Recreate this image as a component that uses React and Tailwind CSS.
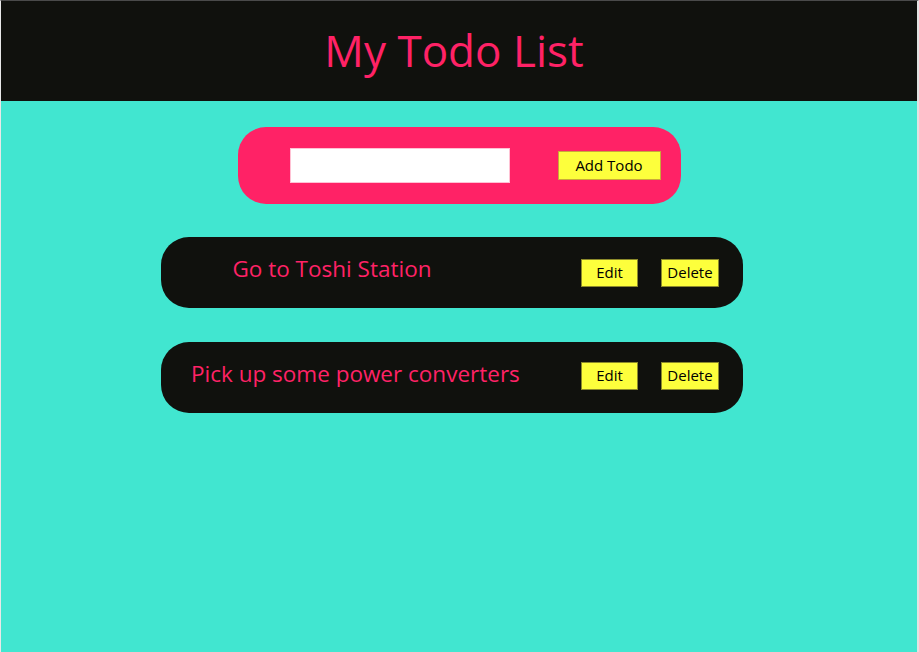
export default function App() {
  const todos = [
    { text: "Go to Toshi Station", btn: "" },
    { text: "Pick up some power converters", btn: "-mt-[4px]" },
  ];
  return (
    <div
      className="min-h-[652px] bg-[#41e6d0] border-l border-l-[#e8e8e8] border-r-2 border-r-[#e2e2e2] border-t border-t-[#4a4a4a]"
      style={{ fontFamily: '"Open Sans", "Noto Sans", sans-serif' }}
    >
      <header className="h-[100px] bg-[#10110d] flex items-center justify-center">
        <h1 className="text-[44px] leading-none text-[#ff2266] -mt-[3px] -ml-[10px]">My Todo List</h1>
      </header>

      <form
        className="mt-[26px] mx-auto w-[443px] h-[77px] rounded-[28px] bg-[#ff2266] flex items-center pl-[52px] pr-[20px]"
        onSubmit={(e) => e.preventDefault()}
      >
        <input
          type="text"
          className="w-[220px] h-[35px] bg-white border border-[#ffc2d4] outline-none px-2"
        />
        <button
          type="submit"
          className="ml-auto w-[103px] h-[29px] bg-[#fdff3c] border border-[#c9a83a] text-[15px] text-black leading-none"
        >
          Add Todo
        </button>
      </form>

      <div className="mt-[33px] ml-[160px] w-[582px] flex flex-col gap-[34px]">
        {todos.map((t, i) => (
          <div
            key={i}
            className="h-[71px] rounded-[28px] bg-[#10110d] flex items-center pl-[30px] pr-[24px]"
          >
            <div className="w-[282px] text-center whitespace-nowrap text-[22.5px] leading-none text-[#ff2266] -mt-[7px]">
              {t.text}
            </div>
            <div className={`ml-auto flex items-center gap-[23px] ${t.btn}`}>
              <button className="w-[57px] h-[28px] bg-[#fdff3c] border border-[#8c8a2a] text-[15px] leading-none text-black">
                Edit
              </button>
              <button className="w-[58px] h-[28px] bg-[#fdff3c] border border-[#8c8a2a] text-[15px] leading-none text-black">
                Delete
              </button>
            </div>
          </div>
        ))}
      </div>
    </div>
  );
}
